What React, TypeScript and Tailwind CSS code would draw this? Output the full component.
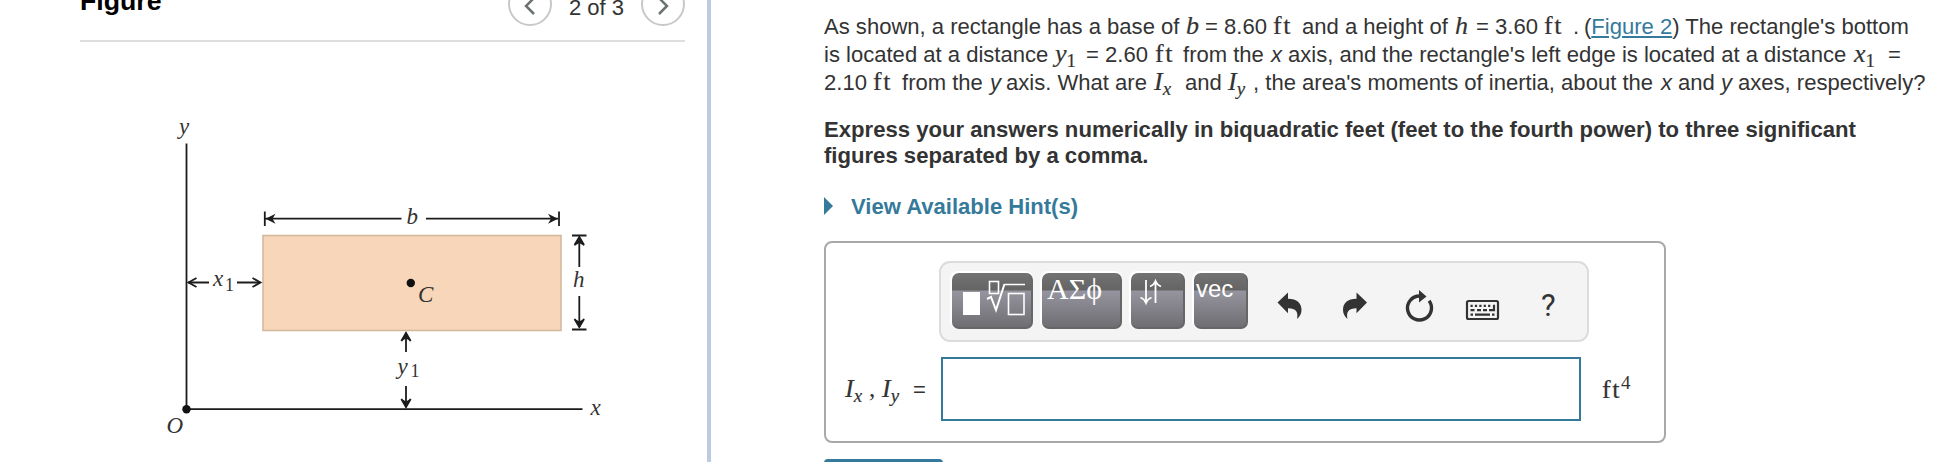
import type { ReactNode } from 'react';

interface SegProps {
  w: string;
  children?: ReactNode;
}

function Seg({ w, children }: SegProps) {
  return <span className={`inline-block shrink-0 whitespace-pre ${w}`}>{children}</span>;
}

function MathVar({ children, sub }: { children: string; sub?: string }) {
  return (
    <span className="font-['Liberation_Serif',serif] text-[26px] italic leading-none [-webkit-text-stroke:0.2px_#333]">
      {children}
      {sub && (
        <span className={`relative top-[5px] text-[19px] ${sub === '1' ? 'not-italic' : ''}`}>{sub}</span>
      )}
    </span>
  );
}

function Unit() {
  return (
    <span className="font-['Liberation_Serif',serif] text-[26px] leading-none tracking-[1.5px] [-webkit-text-stroke:0.2px_#333]">
      ft
    </span>
  );
}

function Diagram() {
  return (
    <svg width="480" height="360" viewBox="150 100 480 360" className="ml-[150px] block">
      <rect x="263" y="235.5" width="298" height="95" fill="#f7d6b9" stroke="#d3b69b" strokeWidth="1.5" />
      <g stroke="#1c1c1c" strokeWidth="1.8" fill="none">
        <path d="M186.5 143.5V409.2H582.5" />
        <path d="M264.8 211.5v14.5M264.8 218.7H401.5M426 218.7H558M559 211.5v14.5" />
        <path d="M188 282.5H209M237 282.5H260M572 235.5h14.5M572 329.5h14.5" />
        <path d="M579.3 238v29M579.3 296v31M406 334v18M406 386v20" />
        <path d="M196.5 278l-8 4.5 8 4.5M252.5 278l8 4.5-8 4.5" />
        <path d="M574.5 245l4.8-8 4.8 8M574.5 319l4.8 8 4.8-8" />
        <path d="M401.3 341l4.7-8 4.7 8M401.3 399l4.7 8 4.7-8" />
      </g>
      <g fill="#1c1c1c">
        <path d="M265.5 218.7l10-5-3 5 3 5zM558 218.7l-10-5 3 5-3 5z" />
        <path d="M579.3 236l5 10-5-3-5 3zM579.3 328.5l5-10-5 3-5-3z" />
        <path d="M406 331.5l5 10-5-3-5 3zM406 408.5l5-10-5 3-5-3z" />
      </g>
      <circle cx="186.5" cy="409.2" r="4.2" fill="#111" />
      <circle cx="410.8" cy="283" r="4.2" fill="#111" />
      <g className="font-['Liberation_Serif',serif] italic" fontSize="23" fill="#333">
        <text x="179" y="133.5">y</text>
        <text x="406.5" y="224.3">b</text>
        <text x="418" y="302">C</text>
        <text x="573" y="287">h</text>
        <text x="590.5" y="414.5">x</text>
        <text x="166.5" y="433">O</text>
        <text x="213" y="286">x</text>
        <text x="397.5" y="374">y</text>
      </g>
      <g className="font-['Liberation_Serif',serif]" fontSize="18" fill="#333">
        <text x="225" y="290.5">1</text>
        <text x="410.5" y="377">1</text>
      </g>
    </svg>
  );
}

function ToolButton({ w, children }: { w: string; children: ReactNode }) {
  return (
    <button
      className={`h-14 shrink-0 overflow-hidden rounded-[7px] border-r-2 border-b-2 border-[#666] bg-[linear-gradient(#737373_0,#646464_17px,#96959f_18px,#6f6e72_100%)] text-left text-white shadow-[-1px_-1px_0_1px_#fff] ${w}`}
    >
      {children}
    </button>
  );
}

function Toolbar() {
  return (
    <div className="ml-[113px] flex h-[81px] w-[650px] items-start rounded-[11px] border-2 border-[#dcdcdc] bg-[#f4f4f4] pt-[10px] pl-[11px]">
      <div className="flex gap-[9px]">
        <ToolButton w="w-[81px]">
          <svg width="79" height="54" viewBox="0 0 79 54" fill="none" stroke="#fff" strokeWidth="1.6">
            <rect x="11" y="19" width="17" height="23" fill="#fff" stroke="none" />
            <rect x="37.5" y="8.5" width="9" height="12" />
            <path d="M52.5 11.5H73" />
            <path d="M35 26l4-2 5 13 8.500-26" strokeWidth="2" />
            <rect x="56.5" y="20.5" width="15.5" height="21" />
          </svg>
        </ToolButton>
        <ToolButton w="w-[80px]">
          <div className="h-[54px] pl-[5px] font-['Liberation_Serif',serif] text-[30px] leading-[32px]">ΑΣϕ</div>
        </ToolButton>
        <ToolButton w="w-[54px]">
          <svg width="52" height="54" viewBox="0 0 52 54" fill="none" stroke="#fff" strokeWidth="1.8">
            <path d="M15 7v23M9.5 24.5c3 1 4.5 3 5.5 5.5 1-2.5 2.5-4.5 5.5-5.5M24.5 30V8M19 13.5c3-1 4.5-3 5.5-5.5 1 2.5 2.5 4.5 5.5 5.5" />
          </svg>
        </ToolButton>
        <ToolButton w="w-[54px]">
          <div className="h-[54px] pl-[2px] text-[24px] leading-[32px]">vec</div>
        </ToolButton>
      </div>
      <svg width="300" height="50" viewBox="1260 280 300 50" className="mt-[7px] ml-[12px]">
        <path d="M1277.5 302.5l10.5-10v6.3c9 0 13.5 4.5 13.5 11 0 4-1.5 6.5-4.5 9.2 1.5-7.5-1-10.5-9-10.8v5z" fill="#333" />
        <path d="M1367 302.5l-10.5-10v6.3c-9 0-13.5 4.5-13.5 11 0 4 1.5 6.5 4.5 9.2-1.5-7.5 1-10.5 9-10.8v5z" fill="#333" />
        <path d="M1419.5 296a12 12 0 1 0 9.6 4.8" fill="none" stroke="#333" strokeWidth="3.4" />
        <path d="M1419 290l7.5 6.5-7.5 6z" fill="#333" />
        <rect x="1467" y="301" width="31" height="18" rx="1.5" fill="none" stroke="#333" strokeWidth="2.2" />
        <g stroke="#333" strokeWidth="2.2" fill="none">
          <path d="M1470.5 305.8h20" strokeDasharray="2.2 2.2" />
          <path d="M1470.5 310.2h4M1477 310.2h12" strokeDasharray="4 2" />
          <path d="M1494 304.7v5.500h-5M1470.5 314.7h2.5M1475 314.7h15M1492 314.7h2.5" />
        </g>
      </svg>
      <span className="mt-[17px] -ml-[19px] font-[Roboto,sans-serif] text-[31px] leading-8 text-[#333]">?</span>
    </div>
  );
}

export default function App() {
  return (
    <div className="flex h-[462px] w-[1956px] overflow-hidden bg-white font-['Liberation_Sans',Arial,sans-serif] text-[22.06px] text-[#333]">
      <section className="h-full w-[711px] shrink-0 border-r-4 border-[#bdcadf]">
        <div className="ml-20 flex h-[42px] w-[605px] items-start border-b-2 border-[#dedede]">
          <h2 className="-mt-[13px] w-[428px] text-[26.7px] font-bold leading-7 text-black">Figure</h2>
          <div className="-mt-[18px] flex items-center">
            <button className="flex size-11 items-center justify-center rounded-full border-2 border-[#c8c8c8]">
              <svg width="12" height="20" viewBox="0 0 12 20" fill="none" stroke="#6b7270" strokeWidth="2.5" className="mt-[3px]">
                <path d="M10 2L2 10l8 8" />
              </svg>
            </button>
            <span className="w-[89px] pt-[8px] text-center">2 of 3</span>
            <button className="flex size-11 items-center justify-center rounded-full border-2 border-[#c8c8c8]">
              <svg width="12" height="20" viewBox="0 0 12 20" fill="none" stroke="#6b7270" strokeWidth="2.5" className="mt-[3px]">
                <path d="M2 2l8 8-8 8" />
              </svg>
            </button>
          </div>
        </div>
        <div className="pt-[58px]">
          <Diagram />
        </div>
      </section>

      <section className="flex flex-col pl-[113px]">
        <div className="pt-[12.5px]">
          <p className="flex h-7 items-baseline leading-7">
            <Seg w="w-[362px]">As shown, a rectangle has a base of</Seg>
            <Seg w="w-[19px]"><MathVar>b</MathVar></Seg>
            <Seg w="w-[68px]">= 8.60</Seg>
            <Seg w="w-[29px]"><Unit /></Seg>
            <Seg w="w-[153px]">and a height of</Seg>
            <Seg w="w-[21px]"><MathVar>h</MathVar></Seg>
            <Seg w="w-[68px]">= 3.60</Seg>
            <Seg w="w-[29px]"><Unit /></Seg>
            <Seg w="w-[11px]">.</Seg>
            <Seg w="w-[330px]">
              (<a href="#" className="text-[#357a9b] underline">Figure 2</a>) The rectangle's bottom
            </Seg>
          </p>
          <p className="flex h-7 items-baseline leading-7">
            <Seg w="w-[231px]">is located at a distance</Seg>
            <Seg w="w-[31px]"><MathVar sub="1">y</MathVar></Seg>
            <Seg w="w-[69px]">= 2.60</Seg>
            <Seg w="w-[28px]"><Unit /></Seg>
            <Seg w="w-[88px]">from the</Seg>
            <Seg w="w-[17px]"><i>x</i></Seg>
            <Seg w="w-[566px]">axis, and the rectangle's left edge is located at a distance</Seg>
            <Seg w="w-[34px]"><MathVar sub="1">x</MathVar></Seg>
            <Seg w="w-[20px]">=</Seg>
          </p>
          <p className="flex h-7 items-baseline leading-7">
            <Seg w="w-[49px]">2.10</Seg>
            <Seg w="w-[29px]"><Unit /></Seg>
            <Seg w="w-[88px]">from the</Seg>
            <Seg w="w-[16px]"><i>y</i></Seg>
            <Seg w="w-[148px]">axis. What are</Seg>
            <Seg w="w-[31px]"><MathVar sub="x">I</MathVar></Seg>
            <Seg w="w-[43px]">and</Seg>
            <Seg w="w-[25px]"><MathVar sub="y">I</MathVar></Seg>
            <Seg w="w-[408px]">, the area's moments of inertia, about the</Seg>
            <Seg w="w-[17px]"><i>x</i></Seg>
            <Seg w="w-[43px]">and</Seg>
            <Seg w="w-[17px]"><i>y</i></Seg>
            <Seg w="w-[200px]">axes, respectively?</Seg>
          </p>
        </div>

        <p className="mt-[20.5px] whitespace-nowrap text-[22.12px] font-bold leading-[26px]">
          Express your answers numerically in biquadratic feet (feet to the fourth power) to three significant
          <br />
          figures separated by a comma.
        </p>

        <button className="mt-[24px] flex h-7 items-center text-left font-bold text-[#357a9b]">
          <svg width="10" height="20" viewBox="0 0 10 20" fill="#357a9b" className="mr-[17px] -mt-[3px]">
            <path d="M0 1l9 9-9 9z" />
          </svg>
          View Available Hint(s)
        </button>

        <div className="mt-[20px] h-[202px] w-[842px] shrink-0 rounded-lg border-2 border-[#a9a9a9] pt-[18px]">
          <Toolbar />
          <div className="mt-[15px] flex h-16 items-center">
            <label className="flex w-[115px] items-baseline pl-[19px]">
              <Seg w="w-[24px]"><MathVar sub="x">I</MathVar></Seg>
              <Seg w="w-[13px]"><span className="font-['Liberation_Serif',serif] text-[25px]">,</span></Seg>
              <Seg w="w-[31px]"><MathVar sub="y">I</MathVar></Seg>
              =
            </label>
            <input className="h-16 w-[640px] border-2 border-[#357a9b] bg-white px-3 outline-none" />
            <span className="ml-[21px] pt-[4px]">
              <Unit />
              <span className="relative -top-[9px] font-['Liberation_Serif',serif] text-[19px]">4</span>
            </span>
          </div>
        </div>

        <button className="mt-4 h-12 w-[119px] shrink-0 rounded-[4px] bg-[#357a9b]" />
      </section>
    </div>
  );
}
